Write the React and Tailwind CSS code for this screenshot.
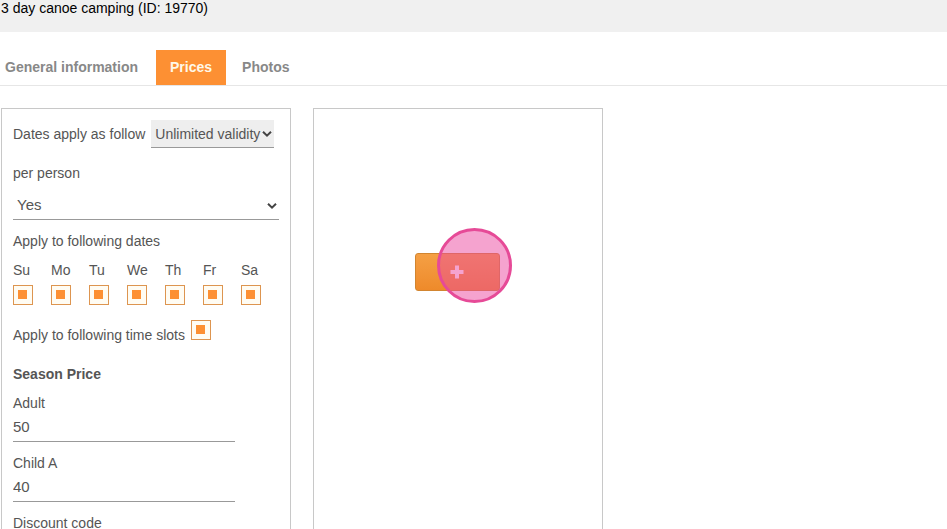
import { useState } from "react";

const TABS = ["General information", "Prices", "Photos"];
const DAYS = ["Su", "Mo", "Tu", "We", "Th", "Fr", "Sa"];

function CheckBox({ id, checked, onChange }) {
  return (
    <span className="grid h-5 w-5 place-items-center">
      <input
        id={id}
        type="checkbox"
        checked={checked}
        onChange={onChange}
        className="peer col-start-1 row-start-1 h-5 w-5 appearance-none border border-[#dd9550] bg-[#fffcf3]"
      />
      <span className="pointer-events-none col-start-1 row-start-1 mr-px mb-px hidden h-[9px] w-[9px] bg-[#fd9033] peer-checked:block" />
    </span>
  );
}

function Chevron() {
  return (
    <svg
      viewBox="0 0 10 7"
      className="pointer-events-none absolute top-1/2 right-0.5 h-[7px] w-2.5 -translate-y-1/2"
      fill="none"
      stroke="#444"
      strokeWidth="2"
    >
      <path d="M1 1.2l4 4 4-4" />
    </svg>
  );
}

function PriceField({ id, label, value, onChange }) {
  return (
    <div className="flex flex-col">
      <label htmlFor={id}>{label}</label>
      <input
        id={id}
        type="text"
        value={value}
        onChange={(e) => onChange(id, e.target.value)}
        className="h-[29px] w-[222px] border-b border-[#999] bg-transparent pb-0.5 text-[15px] outline-none"
      />
    </div>
  );
}

export default function App() {
  const [tab, setTab] = useState("Prices");
  const [validity, setValidity] = useState("unlimited");
  const [perPerson, setPerPerson] = useState("yes");
  const [days, setDays] = useState(DAYS);
  const [timeSlots, setTimeSlots] = useState(true);
  const [prices, setPrices] = useState({ adult: "50", childA: "40", discount: "" });

  const toggleDay = (day) => {
    setDays(days.includes(day) ? days.filter((d) => d !== day) : [...days, day]);
  };

  const setPrice = (id, value) => setPrices({ ...prices, [id]: value });

  return (
    <div className="min-h-screen bg-white font-['Liberation_Sans',Arial,sans-serif] text-sm text-[#555]">
      <header className="h-8 bg-[#f0f0f0] px-px text-black">
        <h1 className="leading-4">3 day canoe camping (ID: 19770)</h1>
      </header>

      {/* Tabs */}
      <nav className="flex gap-0.5 border-b border-[#e6e6e6] pt-[18px]">
        {TABS.map((name) => (
          <button
            key={name}
            type="button"
            onClick={() => setTab(name)}
            className={`h-[35px] px-3.5 pb-0.5 font-bold first:pr-4 first:pl-[5px] ${
              tab === name ? "bg-[#fd9033] text-[#fff8e8]" : "text-[#888]"
            }`}
          >
            {name}
          </button>
        ))}
      </nav>

      <main className="flex items-stretch gap-[22px] px-px pt-[22px] leading-5">
        {/* Season price form */}
        <form className="w-[290px] shrink-0 border border-[#c8c8c8] px-[11px] pt-[11px] pb-6">
          <div className="flex items-center gap-1.5 whitespace-nowrap">
            <label htmlFor="validity">Dates apply as follow</label>
            <div className="relative">
              <select
                id="validity"
                value={validity}
                onChange={(e) => setValidity(e.target.value)}
                className="block h-7 w-[123px] appearance-none border-b border-[#999] bg-[#eee] pl-1"
              >
                <option value="unlimited">Unlimited validity</option>
                <option value="range">Date range</option>
              </select>
              <Chevron />
            </div>
          </div>

          <div className="mt-[15px] flex flex-col gap-2">
            <label htmlFor="perPerson">per person</label>
            <div className="relative">
              <select
                id="perPerson"
                value={perPerson}
                onChange={(e) => setPerPerson(e.target.value)}
                className="block h-[29px] w-full appearance-none border-b border-[#999] bg-transparent pl-1 text-[15px]"
              >
                <option value="yes">Yes</option>
                <option value="no">No</option>
              </select>
              <Chevron />
            </div>
          </div>

          <fieldset className="mt-[11px]">
            <legend>Apply to following dates</legend>
            <div className="mt-[9px] grid grid-cols-7">
              {DAYS.map((day) => (
                <div key={day} className="flex flex-col gap-[5px]">
                  <label htmlFor={day}>{day}</label>
                  <CheckBox id={day} checked={days.includes(day)} onChange={() => toggleDay(day)} />
                </div>
              ))}
            </div>
          </fieldset>

          <div className="mt-[15px] flex items-start gap-1.5">
            <label htmlFor="timeSlots" className="pt-[5px]">
              Apply to following time slots
            </label>
            <CheckBox
              id="timeSlots"
              checked={timeSlots}
              onChange={() => setTimeSlots(!timeSlots)}
            />
          </div>

          <h2 className="mt-[19px] mb-[9px] font-bold">Season Price</h2>
          <div className="flex flex-col gap-[11px]">
            <PriceField id="adult" label="Adult" value={prices.adult} onChange={setPrice} />
            <PriceField id="childA" label="Child A" value={prices.childA} onChange={setPrice} />
            <PriceField id="discount" label="Discount code" value={prices.discount} onChange={setPrice} />
          </div>
        </form>

        {/* Add another season */}
        <section className="flex w-[290px] shrink-0 flex-col items-center border border-[#c8c8c8] pt-36 pr-0.5">
          <div className="relative">
            <button
              type="button"
              aria-label="Add season"
              className="flex h-[38px] w-[85px] items-center justify-center rounded-[3px] border border-[#d28530] bg-linear-to-b from-[#f5a044] to-[#ee8a2a] text-white"
            >
              <svg viewBox="0 0 14 14" className="h-3.5 w-3.5" fill="currentColor">
                <path d="M5 .5h4V5h4.5v4H9v4.5H5V9H.5V5H5z" />
              </svg>
            </button>
            <span className="pointer-events-none absolute -top-[25px] left-[22px] h-[75px] w-[75px] rounded-full border-3 border-[#e64a97] bg-[#eb48a0]/50" />
          </div>
        </section>
      </main>
    </div>
  );
}
